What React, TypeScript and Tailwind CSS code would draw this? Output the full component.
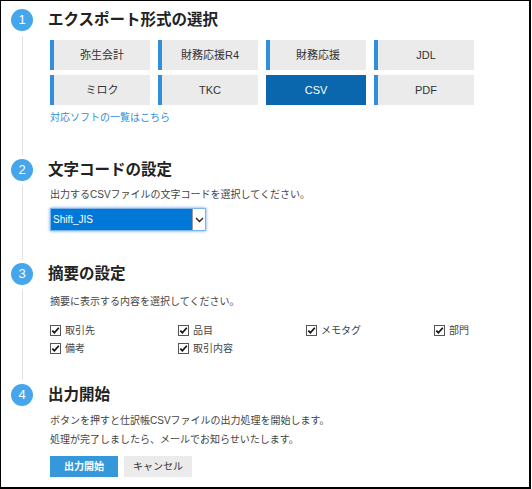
const FONT = "font-['Liberation_Sans','Noto_Sans_CJK_JP',sans-serif]"

const formats = ['弥生会計', '財務応援R4', '財務応援', 'JDL', 'ミロク', 'TKC', 'CSV', 'PDF']
const items = ['取引先', '品目', 'メモタグ', '部門', '備考', '取引内容']

function Step({ n, title, last, children }: { n: number; title: string; last?: boolean; children: React.ReactNode }) {
  return (
    <div className="flex">
      <div className="ml-[10px] flex w-[22px] flex-col items-center">
        <div className="flex h-[22px] w-[22px] shrink-0 items-center justify-center rounded-full bg-[#45a6ec] text-[13px] text-white">
          {n}
        </div>
        {!last && <div className="mt-[5px] mb-[4px] w-px flex-1 bg-[#e3e3e3]" />}
      </div>
      <div className="ml-[17px] flex-1">
        <h2 className="-ml-[2px] h-[22px] text-[15.5px] leading-[22px] font-bold text-[#222]">{title}</h2>
        {children}
      </div>
    </div>
  )
}

function Check({ label }: { label: string }) {
  return (
    <label className="flex h-[18px] items-center gap-[4px] text-[10px] text-[#444]">
      <svg width="11" height="11" viewBox="0 0 11 11">
        <rect x="0.5" y="0.5" width="10" height="10" fill="#fff" stroke="#555" />
        <path d="M2.3 5.6 L4.4 7.8 L8.8 2.8" fill="none" stroke="#111" strokeWidth="1.7" />
      </svg>
      {label}
    </label>
  )
}

export default function App() {
  return (
    <div className={`${FONT} h-[489px] w-[532px] overflow-hidden bg-white`}>
      <div className="h-[489px] w-[531px] border-t border-l border-r-2 border-b-2 border-black pt-[8px]">
        {/* 1 */}
        <Step n={1} title="エクスポート形式の選択">
          <div className="pb-[33px]">
            <div className="mt-[9px] grid w-[424px] grid-cols-4 gap-x-[8px] gap-y-[5px]">
              {formats.map(f =>
                f === 'CSV' ? (
                  <div key={f} className="flex h-[30px] items-center justify-center bg-[#0a67ae] text-[11px] text-white">
                    {f}
                  </div>
                ) : (
                  <div
                    key={f}
                    className="flex h-[30px] items-center justify-center border-l-4 border-[#2f8fdd] bg-[#ebebeb] text-[11px] text-[#333]"
                  >
                    {f}
                  </div>
                )
              )}
            </div>
            <div className="mt-[5px] text-[10px] leading-[16px] text-[#2d8fe0]">対応ソフトの一覧はこちら</div>
          </div>
        </Step>

        {/* 2 */}
        <Step n={2} title="文字コードの設定">
          <div className="pb-[32px]">
            <p className="mt-[6px] text-[10px] leading-[16px] text-[#444]">
              出力するCSVファイルの文字コードを選択してください。
            </p>
            <div className="mt-[5px] flex h-[23px] w-[156px] border border-[#7eb4ea] shadow-[0_0_3px_#5aa0f0]">
              <div className="flex flex-1 items-center bg-[#0078d7] pl-[2px] text-[10px] text-white">Shift_JIS</div>
              <div className="flex w-[13px] items-center justify-center border-l border-[#999] bg-white">
                <svg width="9" height="6" viewBox="0 0 9 6">
                  <path d="M1 1 L4.5 4.5 L8 1" fill="none" stroke="#222" strokeWidth="1.4" />
                </svg>
              </div>
            </div>
          </div>
        </Step>

        {/* 3 */}
        <Step n={3} title="摘要の設定">
          <div className="pb-[27px]">
            <p className="mt-[9px] text-[10px] leading-[16px] text-[#444]">摘要に表示する内容を選択してください。</p>
            <div className="mt-[11px] grid grid-cols-[128px_128px_128px_auto]">
              {items.map(i => (
                <Check key={i} label={i} />
              ))}
            </div>
          </div>
        </Step>

        {/* 4 */}
        <Step n={4} title="出力開始" last>
          <div className="mt-[5px] text-[10px] leading-[19px] text-[#444]">
            <p>ボタンを押すと仕訳帳CSVファイルの出力処理を開始します。</p>
            <p>処理が完了しましたら、メールでお知らせいたします。</p>
          </div>
          <div className="mt-[7px] flex gap-[6px]">
            <button className="h-[21px] w-[68px] bg-[#3498db] text-[10px] font-bold text-white">出力開始</button>
            <button className="h-[21px] w-[68px] bg-[#ebebeb] text-[10px] text-[#333]">キャンセル</button>
          </div>
        </Step>
      </div>
    </div>
  )
}
